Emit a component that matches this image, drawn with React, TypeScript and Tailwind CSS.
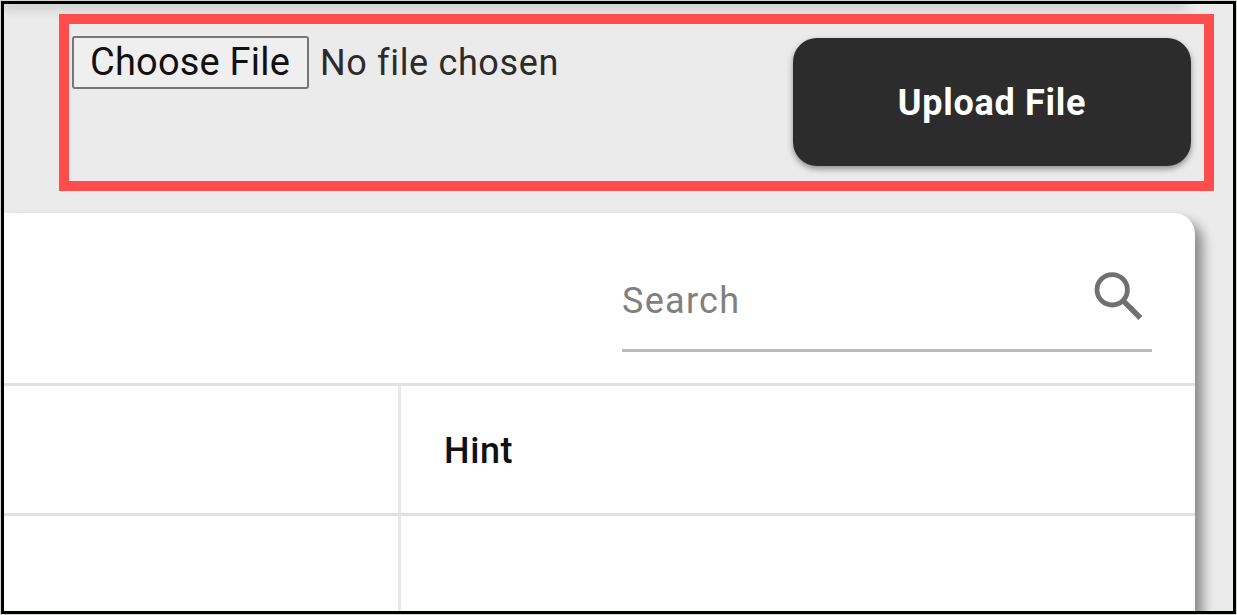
function SearchIcon() {
  return (
    <svg viewBox="0 0 66 66" fill="none" stroke="#707070" className="mt-[6px] size-[66px]">
      <circle cx="26.2" cy="26.8" r="15.2" strokeWidth="4.8" />
      <path d="M36.6 37.2 L54.4 55" strokeWidth="5.4" />
    </svg>
  );
}

function UploadBar() {
  return (
    <section className="ml-[55px] mt-[10px] flex h-[177px] w-[1155px] shrink-0 items-start justify-between border-[10px] border-[#ff4d4d] pl-[3px] pr-[13px]">
      <div className="mt-[12px] flex items-center">
        <button className="h-[53px] w-[237px] rounded-[3px] border-2 border-[#767676] bg-[#efefef] pr-px text-center text-[38px] leading-[47px] tracking-[0.2px] whitespace-nowrap text-[#111]">
          Choose File
        </button>
        <span className="ml-[11px] text-[36px] leading-[52px] tracking-[0.65px] whitespace-nowrap text-[#2b2b2b]">
          No file chosen
        </span>
      </div>
      <button className="mt-[14px] h-[128px] w-[398px] rounded-[24px] bg-[#2c2c2c] pt-px text-[36px] font-bold tracking-[0.7px] text-white shadow-[0_3px_6px_rgba(0,0,0,0.4)]">
        Upload File
      </button>
    </section>
  );
}

function SearchField() {
  return (
    <div className="ml-[618px] mt-[44px] flex h-[95px] w-[530px] items-start justify-between border-b-[3px] border-[#bcbcbc]">
      <span className="mt-[22px] text-[36px] leading-[44px] tracking-[1.3px] text-[#808080]">Search</span>
      <SearchIcon />
    </div>
  );
}

export default function App() {
  return (
    <div className="h-[615px] w-[1237px] overflow-hidden bg-[#d4d6d4] p-px font-['Roboto',sans-serif]">
      <main className="flex h-[613px] w-[1235px] flex-col overflow-hidden border-[3px] border-black bg-[#ebebeb]">
        <div className="h-0 w-[1180px] shrink-0 shadow-[0_0_12px_3px_rgba(0,0,0,0.25)]" />
        <UploadBar />
        <div className="mt-[22px] h-[420px] w-[1191px] shrink-0 rounded-tr-[21px] bg-white shadow-[8px_8px_12px_rgba(0,0,0,0.4)]">
          <div className="h-[170px] overflow-hidden">
            <SearchField />
          </div>
          <div className="grid h-[133px] grid-cols-[397px_1fr] border-y-[3px] border-[#e1e1e1]">
            <div className="border-r-[3px] border-[#e8e8e8]" />
            <div className="flex items-center pl-[43px] pt-[2px] text-[36px] font-medium tracking-[0.6px] text-[#111]">
              Hint
            </div>
          </div>
          <div className="h-[117px] w-[397px] border-r-[3px] border-[#e8e8e8]" />
        </div>
      </main>
    </div>
  );
}
